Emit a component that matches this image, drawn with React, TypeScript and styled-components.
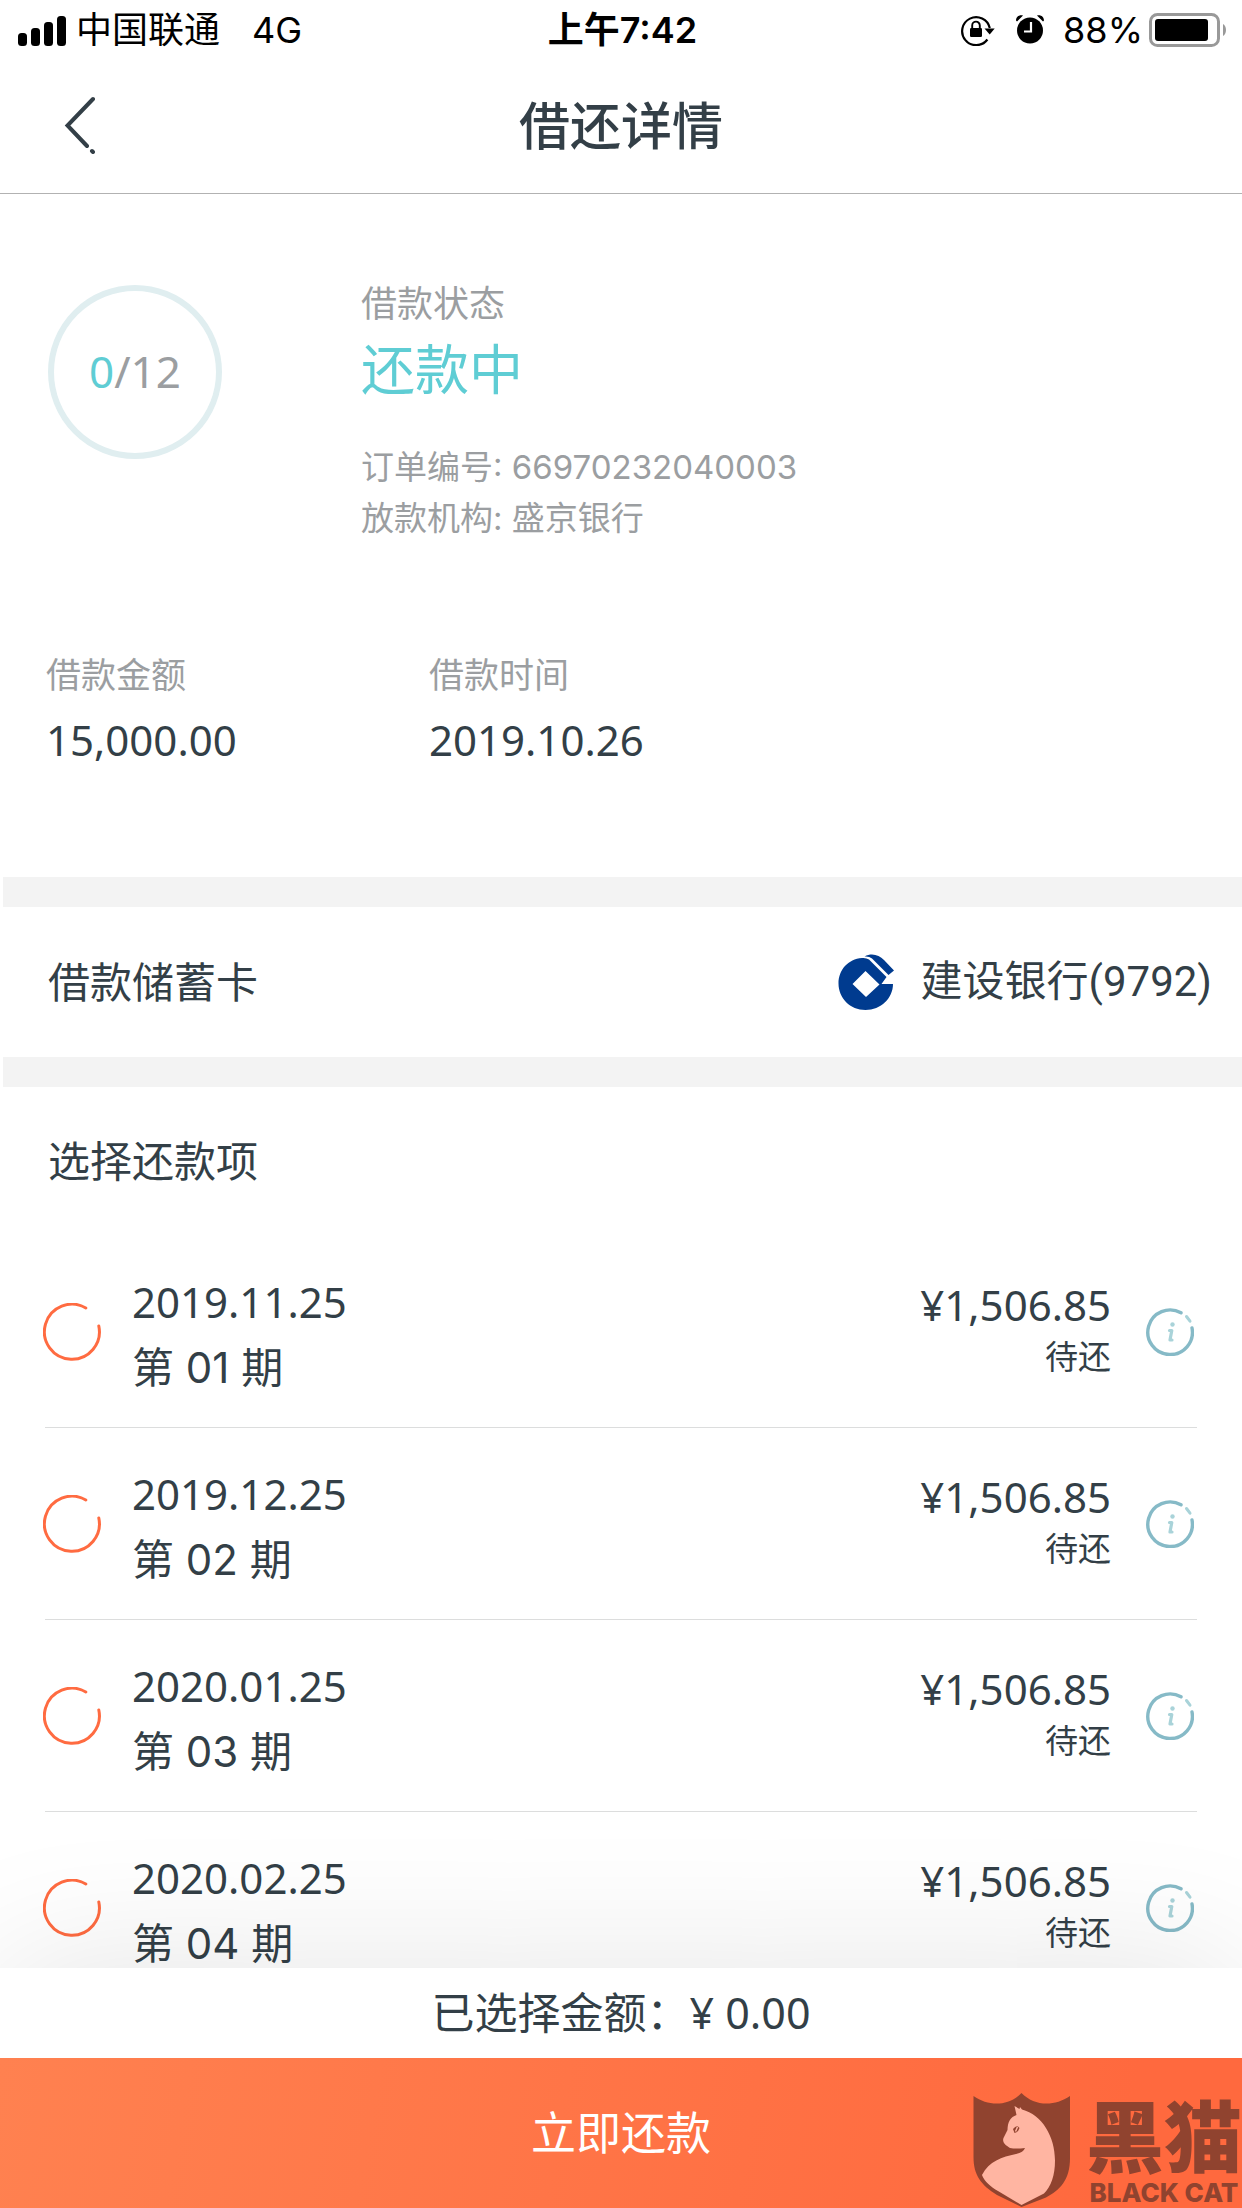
import React from "react";
import styled, { createGlobalStyle } from "styled-components";

const sans = `"Noto Sans", "Noto Sans CJK SC", sans-serif`;
const system = `Inter, "Noto Sans CJK SC", sans-serif`;
const ink = "#333f47";
const muted = "#9b9ea1";
const teal = "#5fcdd4";

const GlobalStyle = createGlobalStyle`
  *, *::before, *::after { box-sizing: border-box; }
  body { margin: 0; background: #fff; }
  h1, h2, p, dl, dt, dd, ul { margin: 0; padding: 0; font-weight: 400; }
  svg { display: block; flex: none; }
  button { border: 0; padding: 0; background: none; cursor: pointer; }
`;

const Screen = styled.div`
  position: relative;
  display: flex;
  flex-direction: column;
  height: 100vh;
  overflow: hidden;
  color: ${ink};
  font-family: ${sans};
  font-size: 42px;
`;

const StatusBar = styled.div`
  flex: none;
  display: grid;
  grid-template-columns: 1fr auto 1fr;
  align-items: center;
  height: 60px;
  padding: 0 15px 0 18px;
  color: #000;
  font-family: ${system};
  font-size: 36px;
  line-height: 60px;
`;

const StatusGroup = styled.div<{ $end?: boolean }>`
  display: flex;
  align-items: center;
  justify-content: ${(p) => (p.$end ? "flex-end" : "flex-start")};
`;

const Carrier = styled.span`
  margin: 0 32px 0 9px;
`;

const Clock = styled.span`
  font-weight: 600;
`;

const StatusIcons = styled.span`
  display: flex;
  gap: 20px;
`;

const Percent = styled.span`
  margin: 0 6px 0 18px;
`;

const Header = styled.header`
  flex: none;
  display: grid;
  grid-template-columns: 144px 1fr 144px;
  align-items: center;
  height: 134px;
  padding-bottom: 4px;
  border-bottom: 1px solid #b2b2b2;
`;

const BackButton = styled.button`
  display: flex;
  align-items: center;
  height: 100px;
  padding-left: 64px;
`;

const Title = styled.h1`
  text-align: center;
  font-size: 51px;
  font-weight: 500;
  line-height: 72px;
`;

const Content = styled.main`
  flex: 1;
  min-height: 0;
  overflow-y: auto;
  scrollbar-width: none;
`;

const Summary = styled.section`
  display: grid;
  grid-template-columns: 313px 1fr;
  padding: 85px 48px 0;
`;

const Progress = styled.div`
  display: flex;
  align-items: center;
  justify-content: center;
  width: 174px;
  height: 174px;
  margin-top: 6px;
  padding-bottom: 3px;
  border: 6px solid #e0eef0;
  border-radius: 50%;
  color: ${muted};
  font-size: 44px;
`;

const Done = styled.span`
  color: ${teal};
`;

const Label = styled.p`
  color: ${muted};
  font-size: 36px;
  line-height: 50px;
`;

const State = styled.p`
  color: ${teal};
  font-size: 54px;
  line-height: 80px;
`;

const Meta = styled.div`
  margin-top: 33px;
  color: ${muted};
  font-family: ${system};
  font-size: 33px;
  line-height: 51px;
`;

const Facts = styled.dl`
  display: grid;
  grid-template-columns: 383px 1fr;
  padding: 106px 46px 105px;
`;

const FactName = styled.dt`
  color: ${muted};
  font-size: 35px;
  line-height: 50px;
`;

const FactValue = styled.dd`
  margin-top: 8px;
  line-height: 64px;
`;

const Band = styled.div`
  height: 30px;
  margin-left: 3px;
  background: #f3f3f3;
`;

const CardRow = styled.section`
  display: flex;
  align-items: center;
  justify-content: space-between;
  height: 150px;
  padding: 0 30px 0 48px;
`;

const Bank = styled.div`
  display: flex;
  align-items: center;
  gap: 26px;
  font-family: Roboto, "Noto Sans CJK SC", sans-serif;
`;

const BankName = styled.span`
  line-height: 60px;
`;

const SectionTitle = styled.h2`
  font-size: 42px;
  line-height: 60px;
`;

const Plan = styled.section`
  padding: 44px 45px 0;
`;

const PlanTitle = styled(SectionTitle)`
  padding: 0 3px;
`;

const List = styled.ul`
  margin-top: 45px;
  list-style: none;
`;

const Row = styled.li`
  display: flex;
  align-items: center;
  height: 192px;
  border-bottom: 1px solid #dcdddd;
`;

const Choice = styled.label`
  flex: 1;
  display: flex;
  align-items: center;
  gap: 31px;
  cursor: pointer;
`;

const Tick = styled.span`
  display: grid;
  margin-left: -2px;

  > * {
    grid-area: 1 / 1;
  }
`;

const TickInput = styled.input`
  width: 58px;
  height: 58px;
  margin: 0;
  opacity: 0;

  &:checked + svg {
    fill: #ff6b41;
  }
`;

const Due = styled.span`
  display: flex;
  flex-direction: column;
  padding-top: 6px;
  line-height: 66px;
`;

const Term = styled.span`
  font-family: ${system};
`;

const Amount = styled.div`
  display: flex;
  flex-direction: column;
  padding-bottom: 2px;
  text-align: right;
  line-height: 52px;
`;

const AmountState = styled.span`
  font-size: 33px;
`;

const InfoButton = styled.button`
  margin: 0 3px 0 35px;
`;

const Footer = styled.footer`
  position: relative;
  flex: none;
  background: #fff;
  box-shadow: 0 0 150px rgba(0, 0, 0, 0.11);
`;

const Total = styled.p`
  text-align: center;
  white-space: pre;
  font-size: 43px;
  line-height: 90px;
`;

const PayButton = styled.button`
  display: block;
  width: 100%;
  height: 150px;
  padding-bottom: 5px;
  background: linear-gradient(100deg, #ff8150, #ff693e 90%);
  color: #fff;
  font-family: ${sans};
  font-size: 45px;
`;

const Watermark = styled.div`
  position: absolute;
  right: 0;
  bottom: 0;
  display: flex;
  gap: 16px;
  color: #90432f;
  pointer-events: none;
`;

const Brand = styled.div`
  display: flex;
  flex-direction: column;
  gap: 6px;
  text-align: center;
`;

const BrandName = styled.span`
  font-family: "Noto Sans CJK SC", sans-serif;
  font-size: 78px;
  font-weight: 900;
  line-height: 80px;
`;

const BrandLatin = styled.span`
  font-family: Inter, sans-serif;
  font-size: 26px;
  font-weight: 800;
  line-height: 28px;
`;

const Signal = () => (
  <svg width="49" height="31" viewBox="0 0 49 31" aria-hidden="true">
    <rect x="0" y="18" width="9" height="13" rx="3.5" />
    <rect x="13" y="13" width="9" height="18" rx="3.5" />
    <rect x="26" y="7" width="9" height="24" rx="3.5" />
    <rect x="39" y="1" width="9" height="30" rx="3.5" />
  </svg>
);

const RotationLock = () => (
  <svg width="34" height="32" viewBox="0 0 34 32" fill="none" aria-hidden="true">
    <path d="M26.400 25.500A14 14 0 1 1 28.800 14" stroke="#000" strokeWidth="2.200" />
    <path d="M23.500 14.500h10.200l-5 6z" fill="#000" />
    <rect x="9" y="14" width="12" height="9" rx="1.200" fill="#000" />
    <path d="M11.200 15v-3.600a3.800 3.800 0 0 1 7.600 0V15" stroke="#000" strokeWidth="1.900" />
  </svg>
);

const Alarm = () => (
  <svg width="30" height="30" viewBox="0 0 30 30" fill="none" aria-hidden="true">
    <circle cx="15" cy="16.500" r="13" fill="#000" />
    <path d="M1 6.500C1 3 4 .5 8 1.500L2 7.500zM29 6.500C29 3 26 .5 22 1.500l6 6z" fill="#000" />
    <path d="M16 8v9.500H9" stroke="#fff" strokeWidth="2.200" />
  </svg>
);

const Battery = () => (
  <svg width="78" height="34" viewBox="0 0 78 34" fill="none" aria-hidden="true">
    <rect x="1.500" y="1.500" width="68" height="31" rx="7" stroke="#999" strokeWidth="3" />
    <rect x="6" y="6" width="53" height="22" rx="3" fill="#000" />
    <path d="M74 11c4 2 4 10 0 12z" fill="#999" />
  </svg>
);

const BackIcon = () => (
  <svg width="33" height="58" viewBox="0 0 33 58" fill="none" stroke={ink} strokeWidth="4" strokeLinecap="round" aria-hidden="true">
    <path d="M29 3 3.500 29.500 23 50M28 55l1 1" />
  </svg>
);

const BankLogo = () => (
  <svg width="57" height="57" viewBox="0 0 57 57" aria-hidden="true">
    <path
      fill="#003b8f"
      fillRule="evenodd"
      d="M24 4C10 5 .5 16 .5 29.500 .5 44 12 56 27.500 56 43 56 55 44 55 30H43.500L48.500 23 31 5.500Q28 3.500 24 4zM27.500 17 41.500 30.500 28 43 14.500 30z"
    />
    <path fill="#003b8f" d="M26.500 2.500C34-1.500 41 1 46 6L56 16.500 50.500 21 34 4.500Q31 2 26.500 2.500z" />
  </svg>
);

const RingIcon = () => (
  <svg width="58" height="58" viewBox="0 0 58 58" fill="none" aria-hidden="true">
    <path d="M42.800 5A27.500 27.500 0 1 0 55.800 23" stroke="#ff6b41" strokeWidth="3" strokeLinecap="round" />
  </svg>
);

const InfoIcon = () => (
  <svg width="48" height="48" viewBox="0 0 48 48" fill="none" strokeLinecap="round" aria-hidden="true">
    <path d="M35 4.800A22.300 22.300 0 1 0 46 20" stroke="#86bac7" strokeWidth="3.400" />
    <path d="M40.500 8.500 44 13.200" stroke="#a9d3d9" strokeWidth="3" />
    <circle cx="26.500" cy="16.500" r="2.200" fill="#a9d3d9" />
    <path d="M23.500 22.500h2.300L24 32h2" stroke="#a9d3d9" strokeWidth="3.200" strokeLinejoin="round" />
  </svg>
);

const CatShield = () => (
  <svg width="97" height="115" viewBox="0 0 97 115" aria-hidden="true">
    <path fill="#90432f" d="M.5 3C16 14 36 13 48.500 0 61 13 81 14 97 3v62c0 22-10 32-24 39.500L48.500 114 24 102C8 92 .5 82 .5 64z" />
    <path
      fill="#ffb5a2"
      d="M41.500 13l5 3 .5-2 2 2.500c20 5 33 27 33 51 0 15-4 26-11 33l-22.500 11.500L25 98C18 94 11 88 9 82c7-14 20-18 34-21 5-1 8-3 9-6-5 .5-10 1-15 0-5-3-8-6-6.500-10l4-8c0-8 3-13 9-15z"
    />
    <path fill="#90432f" d="M40 36q4-5 6.500-1-1 4-5 5z" />
    <path d="m42.500 38.500 2-4.500" stroke="#ffb5a2" strokeWidth="1.500" />
  </svg>
);

const installments = [
  { date: "2019.11.25", term: "01" },
  { date: "2019.12.25", term: "02" },
  { date: "2020.01.25", term: "03" },
  { date: "2020.02.25", term: "04" },
];

export default function App() {
  return (
    <>
      <GlobalStyle />
      <Screen lang="zh-CN">
        <StatusBar>
          <StatusGroup>
            <Signal />
            <Carrier>中国联通</Carrier>
            <span>4G</span>
          </StatusGroup>
          <Clock>上午7:42</Clock>
          <StatusGroup $end>
            <StatusIcons>
              <RotationLock />
              <Alarm />
            </StatusIcons>
            <Percent>88%</Percent>
            <Battery />
          </StatusGroup>
        </StatusBar>

        <Header>
          <BackButton aria-label="返回">
            <BackIcon />
          </BackButton>
          <Title>借还详情</Title>
        </Header>

        <Content>
          <Summary>
            <Progress>
              <Done>0</Done>/12
            </Progress>
            <div>
              <Label>借款状态</Label>
              <State>还款中</State>
              <Meta>
                <p>订单编号: 66970232040003</p>
                <p>放款机构: 盛京银行</p>
              </Meta>
            </div>
          </Summary>

          <Facts>
            <div>
              <FactName>借款金额</FactName>
              <FactValue>15,000.00</FactValue>
            </div>
            <div>
              <FactName>借款时间</FactName>
              <FactValue>2019.10.26</FactValue>
            </div>
          </Facts>

          <Band />
          <CardRow>
            <SectionTitle>借款储蓄卡</SectionTitle>
            <Bank>
              <BankLogo />
              <BankName>建设银行(9792)</BankName>
            </Bank>
          </CardRow>
          <Band />

          <Plan>
            <PlanTitle>选择还款项</PlanTitle>
            <List>
              {installments.map(({ date, term }) => (
                <Row key={term}>
                  <Choice>
                    <Tick>
                      <TickInput type="checkbox" />
                      <RingIcon />
                    </Tick>
                    <Due>
                      <span>{date}</span>
                      <Term>第 {term} 期</Term>
                    </Due>
                  </Choice>
                  <Amount>
                    <span>¥1,506.85</span>
                    <AmountState>待还</AmountState>
                  </Amount>
                  <InfoButton aria-label="详情">
                    <InfoIcon />
                  </InfoButton>
                </Row>
              ))}
            </List>
          </Plan>
        </Content>

        <Footer>
          <Total>已选择金额：¥ 0.00</Total>
          <PayButton>立即还款</PayButton>
        </Footer>

        <Watermark>
          <CatShield />
          <Brand>
            <BrandName>黑猫</BrandName>
            <BrandLatin>BLACK CAT</BrandLatin>
          </Brand>
        </Watermark>
      </Screen>
    </>
  );
}
